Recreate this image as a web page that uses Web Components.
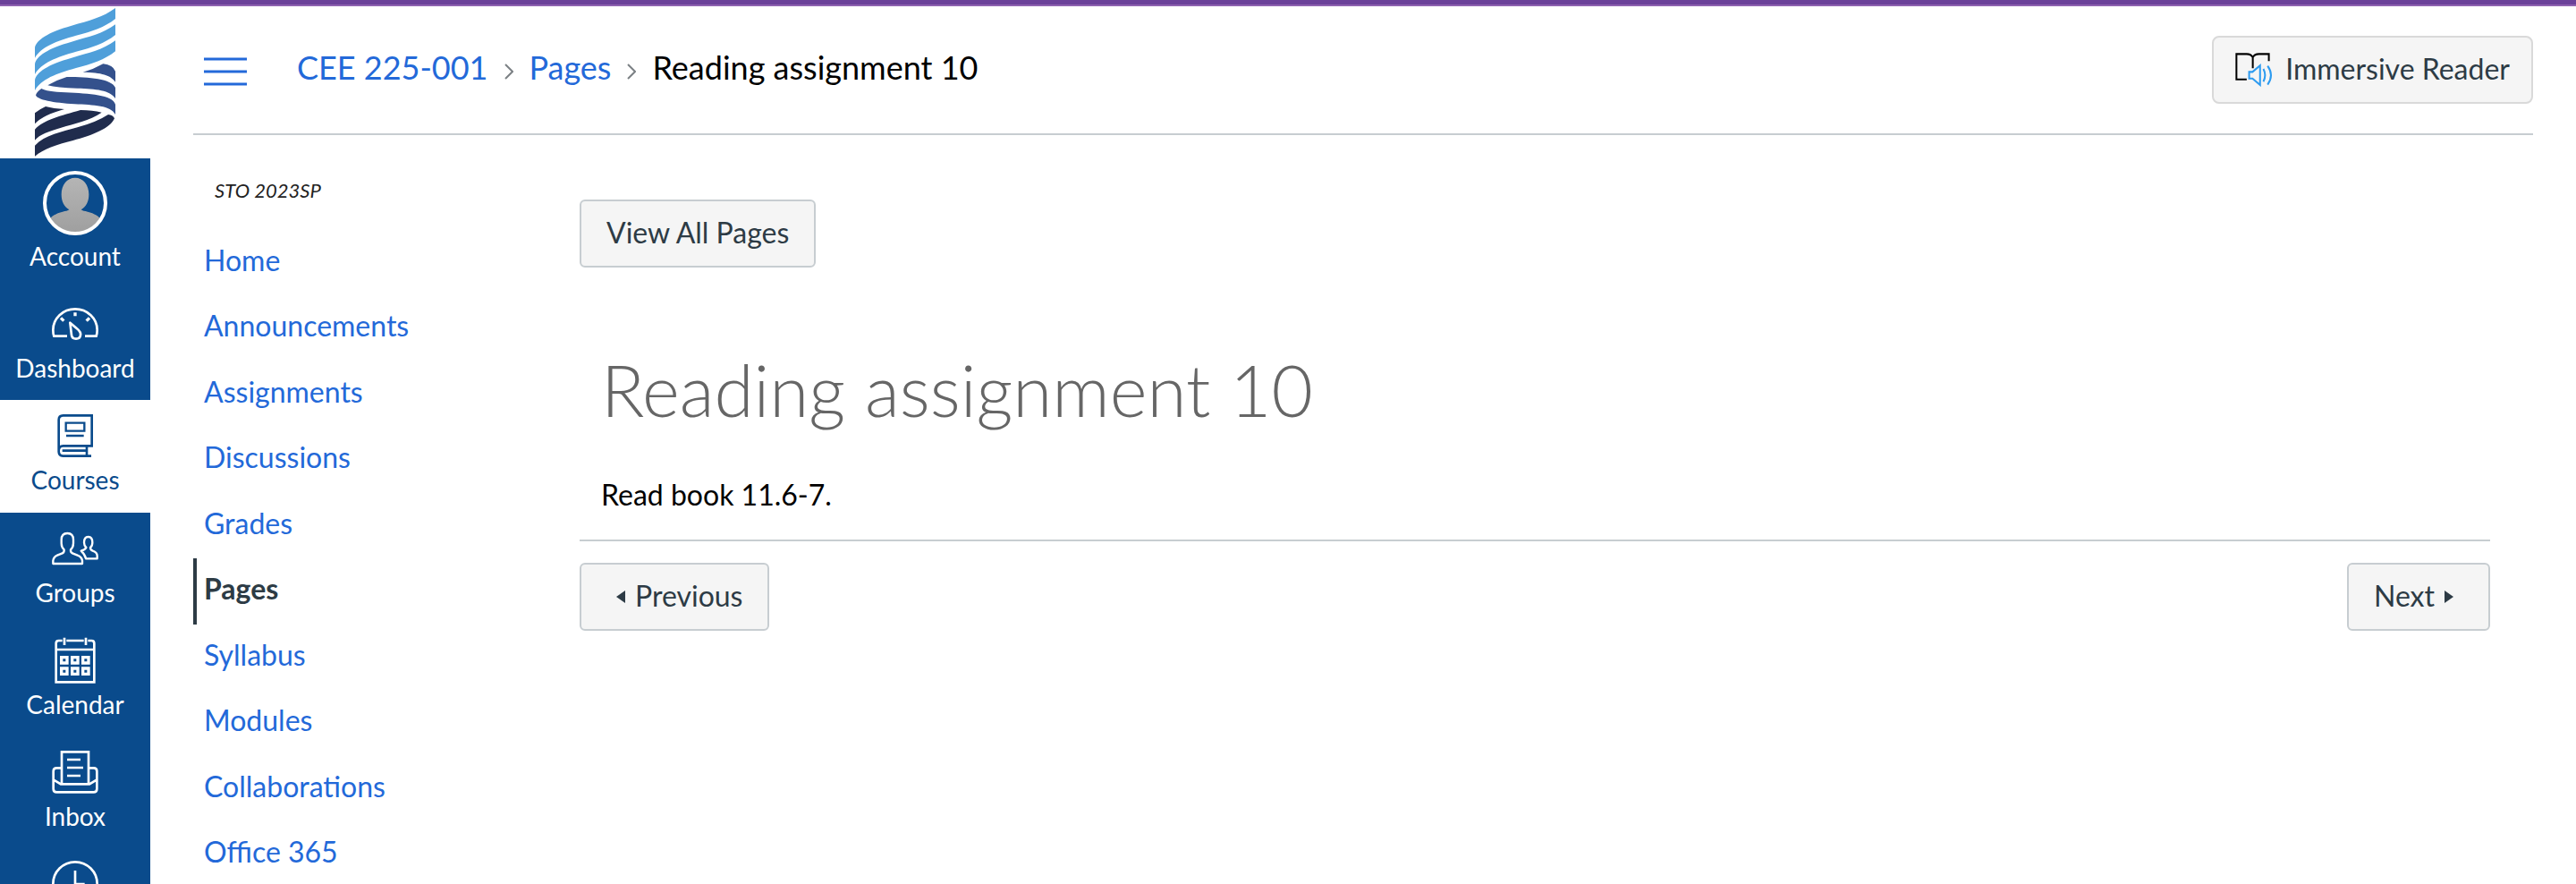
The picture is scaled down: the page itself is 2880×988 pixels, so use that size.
<!DOCTYPE html>
<html lang="en">
<head>
<meta charset="utf-8">
<meta name="viewport" content="width=device-width, initial-scale=1">
<title>Reading assignment 10</title>
<style>
  html, body { margin: 0; height: 100%; }
  body {
    --link: #2369d9; --ink: #2d3b45; --line: #c7cdd1; --brand: #0a4b8c;
    font: 32px/48px Lato, "Liberation Sans", sans-serif;
    color: #000; background: #fff; overflow: hidden;
  }
</style>
</head>
<body>
<course-app>
  <global-nav slot="nav">
    <nav-item icon="account">Account</nav-item>
    <nav-item icon="dashboard">Dashboard</nav-item>
    <nav-item icon="courses" active>Courses</nav-item>
    <nav-item icon="groups">Groups</nav-item>
    <nav-item icon="calendar">Calendar</nav-item>
    <nav-item icon="inbox">Inbox</nav-item>
    <nav-item icon="history" name="History"></nav-item>
  </global-nav>
  <page-header slot="header">
    <crumb-item href="#course">CEE 225-001</crumb-item>
    <crumb-item href="#pages">Pages</crumb-item>
    <crumb-item>Reading assignment 10</crumb-item>
    <ui-button slot="action" icon="reader" soft>Immersive Reader</ui-button>
  </page-header>
  <course-menu slot="menu" term="STO 2023SP">
    <menu-link>Home</menu-link>
    <menu-link>Announcements</menu-link>
    <menu-link>Assignments</menu-link>
    <menu-link>Discussions</menu-link>
    <menu-link>Grades</menu-link>
    <menu-link active>Pages</menu-link>
    <menu-link>Syllabus</menu-link>
    <menu-link>Modules</menu-link>
    <menu-link>Collaborations</menu-link>
    <menu-link>Office 365</menu-link>
  </course-menu>
  <wiki-page heading="Reading assignment 10">
    <ui-button slot="toolbar">View All Pages</ui-button>
    Read book 11.6-7.
    <ui-button slot="pager" icon="prev">Previous</ui-button>
    <ui-button slot="pager" icon="next" trailing>Next</ui-button>
  </wiki-page>
</course-app>

<script>
const define = (name, render) => customElements.define(name, class extends HTMLElement {
  constructor() {
    super();
    this.attachShadow({ mode: "open" });
  }
  connectedCallback() {
    if (this.shadowRoot.childNodes.length) return;
    const t = document.createElement("template");
    t.innerHTML = render(this);
    this.shadowRoot.append(t.content.cloneNode(true));
  }
});

const line = (box, body) =>
  `<svg viewBox="${box}" width="52" height="52" fill="none" stroke="currentColor" stroke-width="8" aria-hidden="true">${body}</svg>`;

const NAV_ICONS = {
  account: `<svg viewBox="144 63 216 216" width="72" height="72" aria-hidden="true">
    <defs><linearGradient id="g" x2="0" y2="1"><stop stop-color="#b5b5b5"/><stop offset="1" stop-color="#9e9e9e"/></linearGradient>
    <clipPath id="c"><circle cx="252" cy="171" r="98"/></clipPath></defs>
    <g clip-path="url(#c)" fill="url(#g)"><path d="M252 86c-27 0-46 24-46 56 0 24 10 43 26 51-4 4-12 5-22 7-22 5-40 16-46 28v51h176v-51c-6-12-24-23-46-28-10-2-18-3-22-7 16-8 26-27 26-51 0-32-19-56-46-56z"/></g>
    <circle cx="252" cy="171" r="102" fill="none" stroke="#fff" stroke-width="12"/></svg>`,
  dashboard: line("174 498 156 156", `<path d="M225 617H181Q178 610 178 596A74 70 0 0 1 326 596Q326 608 323 617H285"/><path d="M252 538v12M204 556l10 10M300 556l-10 10" stroke-width="10"/><path d="M235 572l5 42c2 16 28 16 30 0 2-10-7-18-12-22z" stroke-linejoin="round"/>`),
  courses: line("174 63 156 156", `<path d="M197 195V88q0-15 15-15h96v102h-96q-15 0-15 17 0 17 15 17h94M291 176v32M209 191h82"/><path d="M221 98h62v27h-62zM222 141h59" stroke-width="7"/>`),
  groups: line("174 441 156 156", `<g stroke-width="7" stroke-linejoin="round"><path d="M178 570v-10q2-13 14-18l17-7q7-3 6-12-9-8-9-21v-12q0-22 20-22t20 22v12q0 13-9 21-1 9 6 12l17 7q14 5 16 18v10z"/><path d="M272 527q14-4 17-11-7-6-7-17 0-19 14-19t14 19q0 12-7 17 0 8 8 11 15 5 15 17v9h-38q-3-14-16-26z"/></g>`),
  calendar: line("174 36 156 156", `<path d="M216 38v25M288 38v25M223 48h58M209 48h-12q-9 0-9 9v130h128V57q0-9-9-9h-12M188 78h128"/><path d="M206 104h19v19h-19zM242 104h19v19h-19zM278 104h19v19h-19zM206 141h19v19h-19zM242 141h19v19h-19zM278 141h19v19h-19z" stroke-width="10"/>`),
  inbox: line("174 411 156 156", `<path d="M207 528V421h90v107M207 475h-17q-11 0-11 11v59q0 11 11 11h124q11 0 11-11v-59q0-11-11-11h-17M180 515l24 14h96l24-14"/><path d="M225 447h45M225 474h54M225 501h45"/>`),
  history: line("174 785 156 156", `<circle cx="252" cy="863" r="74"/><path d="M252 818v45h32"/>`)
};

define("course-app", () => `
  <style>
    :host { display: grid; grid-template-rows: auto 1fr; height: 100vh; }
    .strip { height: 5px; background: #6b4199; border-bottom: 2px solid #8e61af; }
    .shell { display: grid; grid-template-columns: 168px 1fr; min-height: 0; }
    .page { padding: 0 48px; min-width: 0; }
    .body { display: grid; grid-template-columns: 432px 1fr; }
  </style>
  <div class="strip"></div>
  <div class="shell">
    <slot name="nav"></slot>
    <div class="page">
      <slot name="header"></slot>
      <div class="body"><slot name="menu"></slot><slot></slot></div>
    </div>
  </div>`);

define("global-nav", () => `
  <style>
    :host { display: flex; flex-direction: column; min-height: 0; overflow: hidden; background: var(--brand); }
    .logo { flex: none; display: flex; justify-content: center; height: 168px; padding-top: 2px; background: #fff; }
    nav { display: flex; flex-direction: column; }
  </style>
  <a class="logo" href="#home" aria-label="University home">
    <svg viewBox="117 27 270 498" width="90" height="166" aria-hidden="true">
      <g fill="#4f9fda">
        <path d="M117 194V160C121 135 160 108 240 86C300 69 345 58 387 27V63C350 92 310 105 255 119C190 137 137 157 117 194Z"/>
        <path d="M117 249V215C121 189 160 162 240 140C300 123 345 113 387 82V117C350 146 310 159 255 173C190 191 137 212 117 249Z"/>
        <path d="M117 303V269C121 243 160 216 240 194C300 177 345 167 387 136V172C350 201 310 214 255 228C190 246 137 266 117 303Z"/>
      </g>
      <g fill="#34518c">
        <path d="M278 242Q315 232 346 214Q379 218 387 239V275C371 252 341 243 278 242Z"/>
        <path d="M160 286Q190 268 224 258C300 258 374 264 387 294V330C370 302 320 298 260 296Q190 295 160 286Z"/>
        <path d="M139 297Q155 307 220 310C300 314 378 318 387 350V384C371 354 315 352 250 349C180 345 124 335 120 319Q124 307 139 297Z"/>
      </g>
      <g fill="#202c4d">
        <path d="M117 415V379Q133 366 153 357Q180 364 216 366Q145 385 117 415Z"/>
        <path d="M117 470V434C145 402 205 388 270 369Q310 369 341 377C300 405 250 414 205 428C165 440 133 450 117 470Z"/>
        <path d="M117 524V488C150 452 210 442 260 427Q325 409 363 384Q378 385 384 397C370 430 310 454 245 471C190 485 145 500 117 524Z"/>
      </g>
    </svg>
  </a>
  <nav aria-label="Global"><slot></slot></nav>`);

define("nav-item", el => `
  <style>
    :host { display: block; color: #fff; }
    :host([active]) { padding-bottom: 1px; background: #fff; color: var(--brand); }
    a { display: flex; flex-direction: column; align-items: center; gap: 6px; padding: 14px 0 19px;
        font-size: 28px; line-height: 34px; color: inherit; text-decoration: none; }
    svg { display: block; }
  </style>
  <a href="#${el.getAttribute("icon")}" ${el.hasAttribute("name") ? `aria-label="${el.getAttribute("name")}"` : ""}>
    ${NAV_ICONS[el.getAttribute("icon")]}<span><slot></slot></span>
  </a>`);

define("page-header", () => `
  <style>
    :host { display: flex; align-items: center; height: 142px; border-bottom: 2px solid var(--line); }
    .toggle { width: 72px; height: 72px; padding: 4px 12px 0; border: 0; background: none; color: var(--link); }
    .toggle svg { display: block; }
    nav { display: flex; flex: 1; align-items: center; margin-left: 44px; }
  </style>
  <button class="toggle" aria-label="Toggle course menu">
    <svg width="48" height="32" viewBox="0 0 48 32" stroke="currentColor" stroke-width="3" aria-hidden="true"><path d="M0 2h48M0 16h48M0 30h48"/></svg>
  </button>
  <nav aria-label="Breadcrumb"><slot></slot></nav>
  <slot name="action"></slot>`);

define("crumb-item", el => {
  const href = el.getAttribute("href");
  return `
  <style>
    :host { display: flex; align-items: center; padding-bottom: 6px; font-size: 36px; line-height: 44px; }
    a { color: var(--link); text-decoration: none; }
    svg { margin: 10px 18px 0; }
  </style>
  ${href
    ? `<a href="${href}"><slot></slot></a><svg width="10" height="18" viewBox="0 0 10 18" fill="none" stroke="#7b8084" stroke-width="2" aria-hidden="true"><path d="M1 1l8 8-8 8"/></svg>`
    : `<span aria-current="page"><slot></slot></span>`}`;
});

const BUTTON_ICONS = {
  reader: `<svg width="42" height="38" viewBox="236 180 124 112" fill="none" stroke-width="6" aria-hidden="true"><path d="M274 268h-34v-84h34q14 0 20 11v36M294 195q6-11 20-11h33v23" stroke="#000"/><path d="M282 243h11l25-21v64l-25-21h-11zM329 233q11 21 0 42M343 223q22 31 0 62" stroke="#2d9bf0"/></svg>`,
  prev: `<svg width="32" height="14" viewBox="0 0 32 14" fill="currentColor" aria-hidden="true"><path d="M21 0v14L11 7z"/></svg>`,
  next: `<svg width="32" height="14" viewBox="0 0 32 14" fill="currentColor" aria-hidden="true"><path d="M11 0v14l10-7z"/></svg>`
};

define("ui-button", el => `
  <style>
    :host { display: inline-flex; }
    button { display: flex; align-items: center; height: 76px; padding: 0 28px 3px; margin: 0;
      border: 2px solid var(--line); border-radius: 6px; background: #f5f5f5; color: var(--ink);
      font: inherit; line-height: 40px; }
    svg { margin-top: 2px; }
    :host([soft]) button { border-color: #d9d9d9; border-radius: 8px; padding: 0 24px 3px; gap: 14px; }
    :host([trailing]) button { flex-direction: row-reverse; }
  </style>
  <button type="button">${BUTTON_ICONS[el.getAttribute("icon")] || ""}<span><slot></slot></span></button>`);

define("course-menu", el => `
  <style>
    :host { display: block; }
    .term { margin: 46px 0 28px 24px; font-size: 22px; line-height: 32px; font-style: italic; color: #222; }
    nav { display: flex; flex-direction: column; width: 384px; }
  </style>
  <div class="term">${el.getAttribute("term")}</div>
  <nav aria-label="Course"><slot></slot></nav>`);

define("menu-link", () => `
  <style>
    :host { display: block; line-height: 68px; }
    a { display: block; padding: 0 0 5px 12px; color: var(--link); text-decoration: none; }
    :host(:nth-child(even)) a { padding-bottom: 6px; }
    :host([active]) a { padding-left: 8px; border-left: 4px solid var(--ink); color: var(--ink); font-weight: 700; }
  </style>
  <a href="#section"><slot></slot></a>`);

define("wiki-page", el => `
  <style>
    :host { display: block; padding: 72px 48px 0 0; }
    .toolbar, .pager { display: flex; justify-content: space-between; }
    article { padding: 88px 24px 26px; }
    h1 { margin: 0 0 46px; font-size: 80px; line-height: 96px; font-weight: 300; color: #666; }
    p { margin: 0; line-height: 48px; }
    .pager { padding-top: 24px; border-top: 2px solid var(--line); }
  </style>
  <div class="toolbar"><slot name="toolbar"></slot></div>
  <article>
    <h1>${el.getAttribute("heading")}</h1>
    <p><slot></slot></p>
  </article>
  <div class="pager"><slot name="pager"></slot></div>`);
</script>
</body>
</html>
